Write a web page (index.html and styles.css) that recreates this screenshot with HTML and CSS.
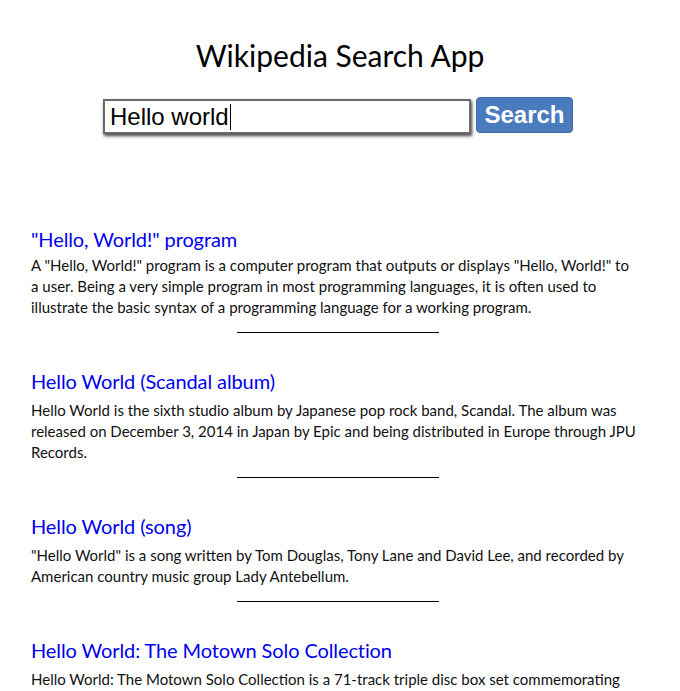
FILE: index.html
```html
<!DOCTYPE html>
<html>
<head>
<meta charset="utf-8">
<link rel="stylesheet" href="styles.css">
</head>
<body>
<div class="app">
  <h1 class="title">Wikipedia Search App</h1>
  <form class="search">
    <div class="field"><span class="query">Hello world</span><span class="caret"></span></div>
    <button type="button" class="btn">Search</button>
  </form>
  <div class="results">
    <div class="result">
      <h2 class="rtitle">"Hello, World!" program</h2>
      <p class="snippet">A "Hello, World!" program is a computer program that outputs or displays "Hello, World!" to a user. Being a very simple program in most programming languages, it is often used to illustrate the basic syntax of a programming language for a working program.</p>
      <hr class="sep">
    </div>
    <div class="result">
      <h2 class="rtitle">Hello World (Scandal album)</h2>
      <p class="snippet">Hello World is the sixth studio album by Japanese pop rock band, Scandal. The album was released on December 3, 2014 in Japan by Epic and being distributed in Europe through JPU Records.</p>
      <hr class="sep">
    </div>
    <div class="result">
      <h2 class="rtitle">Hello World (song)</h2>
      <p class="snippet">"Hello World" is a song written by Tom Douglas, Tony Lane and David Lee, and recorded by American country music group Lady Antebellum.</p>
      <hr class="sep">
    </div>
    <div class="result">
      <h2 class="rtitle">Hello World: The Motown Solo Collection</h2>
      <p class="snippet">Hello World: The Motown Solo Collection is a 71-track triple disc box set commemorating the career of Michael Jackson as a solo artist at Motown Records.</p>
      <hr class="sep">
    </div>
  </div>
</div>
</body>
</html>
```
FILE: styles.css
```css
html, body { margin: 0; padding: 0; background: #fff; }
body { font-family: Lato, "Noto Sans", sans-serif; color: #111; overflow: hidden; height: 691px; }
.app { padding: 0 31px; }
.title { margin: 0; padding-top: 36px; text-align: center; font-weight: 400; font-size: 30px; line-height: 38px; color: #000; }
.search { display: flex; justify-content: center; align-items: flex-start; gap: 5px; margin-top: 23px; margin-right: 4px; }
.field { box-sizing: border-box; width: 368px; height: 35px; margin-top: 2px; border: 2px solid #6a6a6a; box-shadow: 1px 2px 3px rgba(0,0,0,0.75); background: #fff; display: flex; align-items: center; padding-left: 5px; font-family: "Liberation Sans", Arial, sans-serif; font-size: 24px; color: #000; }
.caret { display: inline-block; width: 1px; height: 26px; background: #000; margin-left: 1px; }
.btn { box-sizing: border-box; width: 97px; height: 36px; border: 1px solid #3f6aa6; border-radius: 4px; background: #4a7bbd; color: #fff; font-family: "Liberation Sans", Arial, sans-serif; font-weight: 700; font-size: 24px; padding: 0; }
.results { margin-top: 92px; padding-right: 10px; }
.rtitle { margin: 0; font-weight: 400; font-size: 20px; line-height: 26px; color: #0000ee; letter-spacing: -0.1px; }
.snippet { margin: 6px 0 0; font-size: 15px; line-height: 21px; color: #111; }
.result:first-child .snippet { margin-top: 3px; }
.sep { width: 202px; margin: 14px 0 0 206px; border: 0; border-top: 1px solid #000; height: 0; }
.result + .result { margin-top: 35px; }
```
